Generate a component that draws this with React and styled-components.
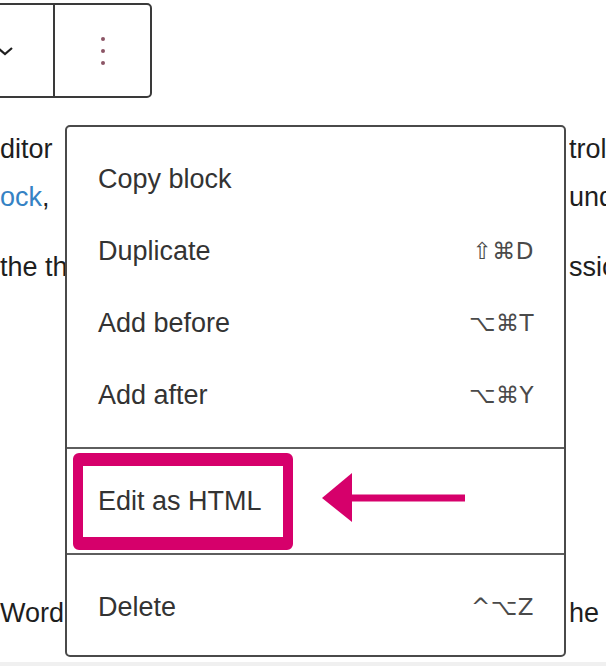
import React from "react";
import styled, { createGlobalStyle } from "styled-components";

const Global = createGlobalStyle`
  html, body { margin: 0; padding: 0; background: #f0f0f0; }
  body { font-family: "Liberation Sans", Arial, sans-serif; }
`;

const Page = styled.div`
  position: relative;
  width: 606px;
  height: 662px;
  background: #ffffff;
  overflow: hidden;
  color: #1e1e1e;
`;

const Toolbar = styled.div`
  display: flex;
  margin-left: -50px;
  margin-top: 3px;
  width: 202px;
  height: 95px;
  box-sizing: border-box;
  border: 2px solid #3a3a3a;
  border-radius: 5px;
  background: #fff;
`;

const ToolButton = styled.div`
  width: ${(p) => p.$w}px;
  display: flex;
  align-items: center;
  justify-content: center;
  border-left: ${(p) => (p.$divider ? "2px solid #3a3a3a" : "none")};
  box-sizing: border-box;
`;

const Text = styled.div`
  margin-top: 27px;
  font-size: 27px;
  line-height: 48px;
`;

const Para = styled.div`
  margin-top: ${(p) => p.$top || 0}px;
  margin-bottom: ${(p) => p.$gap || 0}px;
`;

const Line = styled.div`
  display: flex;
  white-space: nowrap;
  width: 606px;
`;

const Left = styled.div`
  width: ${(p) => p.$w}px;
  overflow: hidden;
  flex: none;
`;

const Right = styled.div`
  margin-left: auto;
  width: 37px;
  overflow: hidden;
  flex: none;
`;

const Link = styled.span`
  color: #3582c4;
`;

const Menu = styled.div`
  position: absolute;
  left: 65px;
  top: 125px;
  width: 501px;
  height: 532px;
  box-sizing: border-box;
  border: 2px solid #4a4a4a;
  border-radius: 5px;
  background: #fff;
  display: flex;
  flex-direction: column;
`;

const Group = styled.div`
  position: relative;
  padding: 16px 8px;
  border-top: ${(p) => (p.$sep ? "2px solid #5e5e5e" : "none")};
`;

const Item = styled.div`
  display: flex;
  align-items: center;
  justify-content: space-between;
  height: 72px;
  padding: 0 22px 0 23px;
  font-size: 27px;
  color: #333333;
`;

const Shortcut = styled.span`
  font-family: "DejaVu Sans", "Liberation Sans", sans-serif;
  font-size: 23px;
  color: #4a4a4a;
  letter-spacing: 0.5px;
`;

const Highlight = styled.div`
  position: absolute;
  left: 6px;
  top: 4px;
  width: 220px;
  height: 97px;
  box-sizing: border-box;
  border-style: solid;
  border-color: #d6006b;
  border-width: 13px 10px 13px 10px;
  border-radius: 6px;
  pointer-events: none;
`;

const Arrow = styled.svg`
  position: absolute;
  left: 318px;
  top: 470px;
`;

const items1 = [
  ["Copy block", ""],
  ["Duplicate", "⇧⌘D"],
  ["Add before", "⌥⌘T"],
  ["Add after", "⌥⌘Y"],
];

export default function App() {
  return (
    <>
      <Global />
      <Page>
        <Toolbar>
          <ToolButton $w={101}>
            <svg width="24" height="24" viewBox="0 0 24 24" style={{ marginLeft: 4 }}>
              <path d="M5 9l7 6 7-6" fill="none" stroke="#1e1e1e" strokeWidth="2.2" />
            </svg>
          </ToolButton>
          <ToolButton $w={97} $divider>
            <svg width="8" height="30" viewBox="0 0 8 30">
              <circle cx="4" cy="3" r="2" fill="#8c5566" />
              <circle cx="4" cy="15" r="2" fill="#8c5566" />
              <circle cx="4" cy="27" r="2" fill="#8c5566" />
            </svg>
          </ToolButton>
        </Toolbar>
        <Text>
          <Para $gap={22}>
            <Line>
              <Left $w={60}>ditor</Left>
              <Right>trols</Right>
            </Line>
            <Line>
              <Left $w={60}>
                <Link>ock</Link>,
              </Left>
              <Right>under</Right>
            </Line>
          </Para>
          <Para>
            <Line>
              <Left $w={66}>the three</Left>
              <Right>ssion</Right>
            </Line>
          </Para>
          <Para $top={298}>
            <Line>
              <Left $w={66}>Word</Left>
              <Right>he</Right>
            </Line>
          </Para>
        </Text>
        <Menu>
          <Group>
            {items1.map(([label, sc]) => (
              <Item key={label}>
                <span>{label}</span>
                <Shortcut>{sc}</Shortcut>
              </Item>
            ))}
          </Group>
          <Group $sep>
            <Item>
              <span>Edit as HTML</span>
            </Item>
            <Highlight />
          </Group>
          <Group $sep>
            <Item>
              <span>Delete</span>
              <Shortcut>^⌥Z</Shortcut>
            </Item>
          </Group>
        </Menu>
        <Arrow width="152" height="56" viewBox="0 0 152 56">
          <polygon points="4,28 34,3 34,52" fill="#d6006b" />
          <rect x="32" y="24.5" width="115" height="7" fill="#d6006b" />
        </Arrow>
      </Page>
    </>
  );
}
